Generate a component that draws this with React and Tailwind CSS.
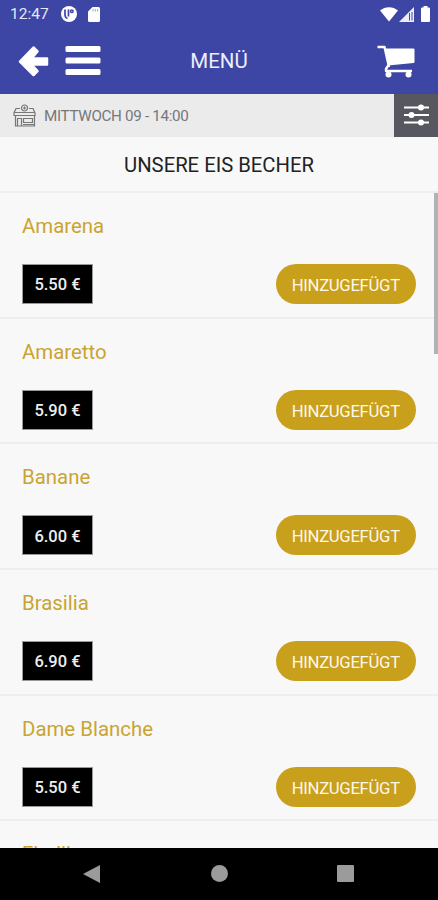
const items = [
  { name: 'Amarena', price: '5.50 €' },
  { name: 'Amaretto', price: '5.90 €' },
  { name: 'Banane', price: '6.00 €' },
  { name: 'Brasilia', price: '6.90 €' },
  { name: 'Dame Blanche', price: '5.50 €' },
  { name: 'Findik', price: '5.50 €' },
]

function StatusBar() {
  return (
    <div className="flex h-7 items-center pl-[10px] pr-[8px] text-white">
      <span className="w-[51px] pt-[2px] text-[15.5px] leading-none text-[#e6e7f5]">12:47</span>
      <svg width="16" height="16" viewBox="0 0 16 16">
        <circle cx="8" cy="8" r="8" fill="currentColor" />
        <path d="M4 3.500v5c0 2 1 3.500 2.500 4M7.500 3.500v7" fill="none" stroke="#3d46a5" strokeWidth="1.700" />
        <circle cx="10.800" cy="5.300" r="1.300" fill="none" stroke="#3d46a5" strokeWidth="1.500" />
      </svg>
      <svg className="ml-[11px]" width="12" height="15" viewBox="0 0 12 15">
        <path d="M4.500 0H10.500a1.500 1.500 0 0 1 1.500 1.500V13.500a1.500 1.500 0 0 1-1.500 1.500H1.500A1.500 1.500 0 0 1 0 13.500V4.500z" fill="currentColor" />
        <path d="M5 2v2.500M7.300 2v2.500M9.600 2v2.500" stroke="#3d46a5" strokeWidth="0.500" />
      </svg>
      <div className="ml-auto flex items-center">
        <svg width="18" height="15" viewBox="0 0 18 15">
          <path d="M0 3.500C5-1 13-1 18 3.500L9 14.500z" fill="currentColor" />
        </svg>
        <svg className="ml-px" width="15" height="15" viewBox="0 0 15 15">
          <path d="M0 15 15 0V15z" fill="currentColor" opacity="0.900" />
          <path d="M10.500 6V13.500M13 5V13.500" stroke="#3d46a5" strokeWidth="1" />
        </svg>
        <svg className="ml-[7px]" width="9" height="16" viewBox="0 0 9 16">
          <path d="M2.500 0h4v1.500H8a1 1 0 0 1 1 1V15a1 1 0 0 1-1 1H1a1 1 0 0 1-1-1V2.500a1 1 0 0 1 1-1h1.500z" fill="currentColor" />
        </svg>
      </div>
    </div>
  )
}

function Header() {
  return (
    <div className="grid h-[66px] grid-cols-3 items-center pl-[18px] pr-[23px] text-white">
      <div className="flex items-center">
        <svg width="31" height="32" viewBox="0 0 31 32" fill="currentColor" stroke="currentColor" strokeWidth="2.500" strokeLinejoin="round">
          <path d="M2 16.500 15.500 2.500l4 4-6 7h15.500v6H13.500l6 6.500-4 4z" />
        </svg>
        <svg className="ml-4" width="36" height="32" viewBox="0 0 36 32" fill="currentColor">
          <rect x="0.500" y="1" width="35" height="6" rx="1.500" />
          <rect x="0.500" y="12.500" width="35" height="6" rx="1.500" />
          <rect x="0.500" y="24" width="35" height="6" rx="1.500" />
        </svg>
      </div>
      <h1 className="pl-[5px] pt-px text-center text-[20.5px] leading-none text-[#eeeef8]">MENÜ</h1>
      <svg className="justify-self-end" width="38" height="33" viewBox="0 0 38 33">
        <path d="M0.500 2H7.500L12 22M11.500 20l-2.500 4v2h26" fill="none" stroke="currentColor" strokeWidth="2.400" strokeLinejoin="round" />
        <path d="M7.500 3.500h29a1 1 0 0 1 1 1v12.500a1 1 0 0 1-1 1L11 20.500z" fill="currentColor" />
        <circle cx="11.500" cy="29.500" r="3" fill="currentColor" />
        <circle cx="31.500" cy="29.500" r="3" fill="currentColor" />
      </svg>
    </div>
  )
}

function PickupBar() {
  return (
    <div className="flex h-[43.5px] shrink-0 items-center bg-[#ebebeb] pl-[13px] text-[#77777a]">
      <svg width="23" height="23" viewBox="0 0 23 23" fill="none" stroke="currentColor" strokeWidth="1.200">
        <path d="M7 4.500H3L1 9v2.500h21V9l-2-4.500h-4M2.500 11.500V22h19V11.500M1.500 8.500h20M4.500 21.500v-7h4v7M10.500 14.500h9v4h-9zM10 20.500h11" />
        <circle cx="11.500" cy="4" r="3" />
        <path d="M10 4h3M11.500 2.500v3" />
      </svg>
      <span className="ml-2 pt-[3px] text-[15.200px] leading-none tracking-[-0.320px]">MITTWOCH 09 - 14:00</span>
      <button type="button" className="ml-auto flex h-full w-11 items-center justify-center bg-[#57585f] text-white">
        <svg width="25" height="22" viewBox="0 0 25 22">
          <path d="M0 3.500h25M0 11h25M0 18.500h25" stroke="currentColor" strokeWidth="2.200" />
          <circle cx="17" cy="3.500" r="3" fill="currentColor" />
          <circle cx="7.500" cy="11" r="3" fill="currentColor" />
          <circle cx="17" cy="18.500" r="3" fill="currentColor" />
        </svg>
      </button>
    </div>
  )
}

function MenuItem({ item }) {
  return (
    <li className="h-[125.700px] border-b-2 border-[#eeeeee] px-[22px] pt-[21px]">
      <h3 className="text-[20.400px] leading-6 text-[#c9a432]">{item.name}</h3>
      <div className="mt-[26px] flex items-center justify-between">
        <span className="flex h-10 w-[71px] items-center justify-center border border-[#999] bg-black pt-[3px] text-[16.500px] font-medium text-[#eee]">
          {item.price}
        </span>
        <button type="button" className="h-10 w-[140.500px] rounded-full bg-[#c9a01c] pt-[3px] text-[16.700px] tracking-[-0.300px] text-[#fdf8e8]">
          HINZUGEFÜGT
        </button>
      </div>
    </li>
  )
}

function NavBar() {
  return (
    <div className="grid h-[52.500px] shrink-0 grid-cols-3 items-center justify-items-center bg-black px-[30px] text-[#9b9b9b]">
      <svg className="-ml-[3px]" width="17" height="18" viewBox="0 0 17 18" fill="currentColor">
        <path d="M0 9 17 0v18z" />
      </svg>
      <span className="size-[17px] rounded-full bg-[#9b9b9b]" />
      <span className="size-[17px] rounded-[1px] bg-[#9b9b9b]" />
    </div>
  )
}

export default function App() {
  return (
    <div className="flex h-[900px] w-[438px] flex-col overflow-hidden bg-[#f8f8f8] font-['Roboto',sans-serif]">
      <header className="h-[93.500px] shrink-0 bg-[#3d46a5]">
        <StatusBar />
        <Header />
      </header>
      <PickupBar />
      <h2 className="flex h-[55.500px] shrink-0 items-center justify-center border-b-2 border-[#eeeeee] pt-[3px] text-[20.250px] text-[#222]">
        UNSERE EIS BECHER
      </h2>
      <main className="relative min-h-0 flex-1 overflow-hidden">
        <ul className="pt-[0.500px]">
          {items.map((item) => (
            <MenuItem key={item.name} item={item} />
          ))}
        </ul>
        <div className="absolute -top-px right-0 h-[162px] w-[4px] bg-[#b3b3b3]" />
      </main>
      <NavBar />
    </div>
  )
}
